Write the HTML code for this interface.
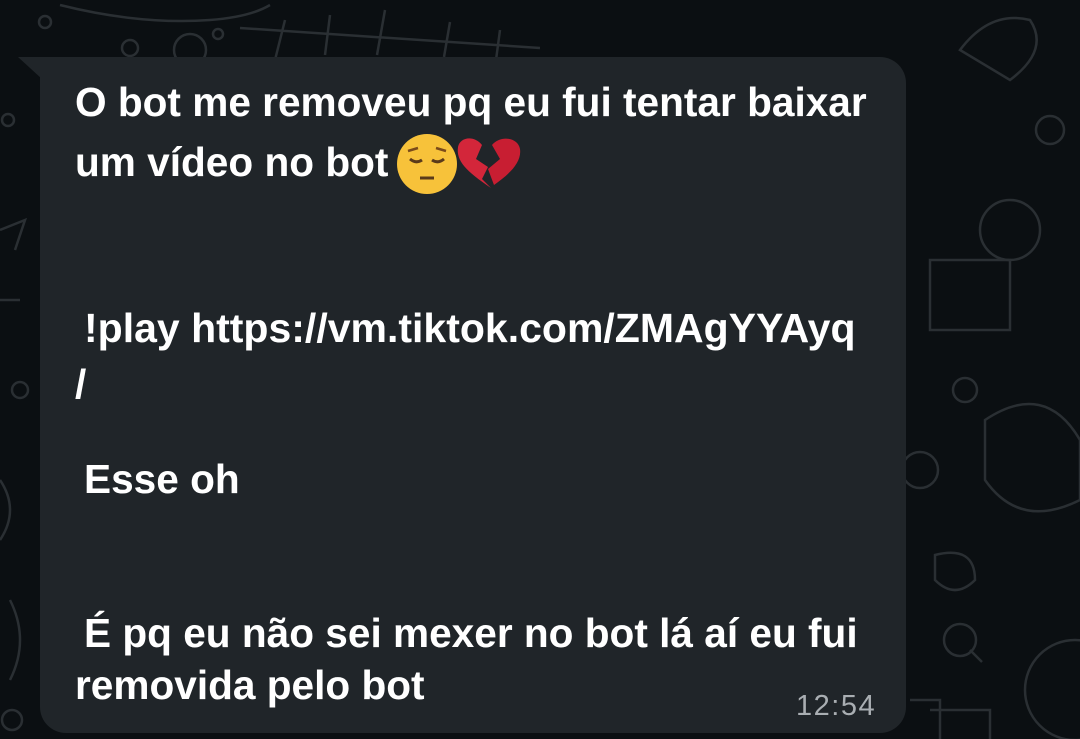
<!DOCTYPE html>
<html><head><meta charset="utf-8"><style>
html,body{margin:0;padding:0;width:1080px;height:739px;overflow:hidden;background:#0b0f12;}
.bg{position:absolute;inset:0;}
.bubble{position:absolute;left:40px;top:57px;width:866px;height:676px;background:#202529;border-radius:0 26px 26px 26px;}
.tail{position:absolute;left:18px;top:57px;width:0;height:0;border-top:22px solid #202529;border-left:24px solid transparent;}
.l{position:absolute;left:75px;color:#fff;font-family:"Liberation Sans",sans-serif;font-weight:bold;font-size:41px;white-space:nowrap;transform:scaleX(0.99);transform-origin:left top;line-height:1;}
.t{position:absolute;left:796px;top:690px;color:#a9aeb2;font-family:"Liberation Sans",sans-serif;font-size:29px;letter-spacing:1.5px;}
</style></head><body>
<svg class="bg" width="1080" height="739" fill="none" stroke="#2a2f33" stroke-width="2.5">
<path d="M60 5 q80 20 150 15 q40 -3 60 -15"/><circle cx="45" cy="22" r="6"/><circle cx="218" cy="34" r="5"/>
<path d="M240 28 l300 20 M285 20 l-10 40 M330 15 l-5 40 M385 10 l-8 45 M450 22 l-6 35 M500 30 l-4 30"/>
<circle cx="130" cy="48" r="8"/><circle cx="190" cy="50" r="16"/>
<path d="M960 50 q30 -40 70 -30 q20 30 -20 60 z"/><circle cx="1050" cy="130" r="14"/>
<path d="M930 260 h80 v70 h-80 z"/><circle cx="1010" cy="230" r="30"/><circle cx="965" cy="390" r="12"/>
<path d="M985 420 q60 -40 95 20 v60 q-60 30 -95 -20 z"/><circle cx="920" cy="470" r="18"/>
<path d="M935 555 q40 -10 40 25 q-20 20 -40 0 z"/><circle cx="960" cy="640" r="16"/><path d="M970 650 l12 12"/>
<path d="M910 700 h30 v39 M930 710 h60 v29"/><circle cx="1075" cy="690" r="50"/>
<path d="M0 230 l25 -10 l-10 30 M0 480 q20 30 0 60 M0 300 h20 M10 600 q20 40 0 80"/>
<circle cx="8" cy="120" r="6"/><circle cx="20" cy="390" r="8"/><circle cx="12" cy="720" r="10"/>
</svg>
<div class="tail"></div>
<div class="bubble"></div>
<div class="l" style="top:82px">O bot me removeu pq eu fui tentar baixar</div>
<div class="l" style="top:142px">um vídeo no bot</div>
<svg style="position:absolute;left:396px;top:133px" width="130" height="62">
<circle cx="31" cy="31" r="30" fill="#f7c23a"/>
<path d="M14 26 q6 5 12 1 M36 27 q6 4 12 -1" stroke="#5a3a1a" stroke-width="3" fill="none"/>
<path d="M12 18 l10 -3 M50 18 l-10 -3" stroke="#7a4a1a" stroke-width="2.5"/>
<path d="M24 45 h14" stroke="#5a3a1a" stroke-width="3"/>
<path d="M95 55 C70 38 60 28 62 14 C64 4 78 2 86 12 L80 26 L92 34 L86 46 Z" fill="#d3263a"/>
<path d="M98 52 L92 36 L104 26 L96 12 C104 2 122 4 124 16 C126 30 112 42 98 52 Z" fill="#c81e32"/>
</svg>
<div class="l" style="top:308px;left:84px;transform:scaleX(1.0)">!play https://vm.tiktok.com/ZMAgYYAyq</div>
<div class="l" style="top:364px">/</div>
<div class="l" style="top:459px;left:84px">Esse oh</div>
<div class="l" style="top:613px;left:84px">É pq eu não sei mexer no bot lá aí eu fui</div>
<div class="l" style="top:665px">removida pelo bot</div>
<div class="t">12:54</div>
</body></html>
